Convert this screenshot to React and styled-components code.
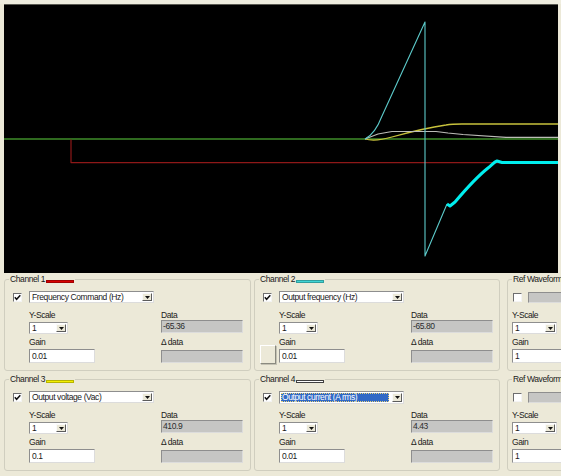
import React from 'react'
import styled, { createGlobalStyle, css } from 'styled-components'

const GlobalStyle = createGlobalStyle`
  html, body {
    margin: 0;
    padding: 0;
    background: #ece9d8;
  }
  body {
    font-family: "Liberation Sans", Arial, sans-serif;
    font-size: 8.5px;
    letter-spacing: -0.4px;
    color: #1a1a1a;
  }
`

const channelRows = [
  [
    { name: 'Channel 1', color: '#d80000', signal: 'Frequency Command (Hz)', data: '-65.36', gain: '0.01' },
    { name: 'Channel 2', color: '#40d4d4', signal: 'Output frequency (Hz)', data: '-65.80', gain: '0.01', extra: true },
  ],
  [
    { name: 'Channel 3', color: '#f4f000', signal: 'Output voltage (Vac)', data: '410.9', gain: '0.1' },
    { name: 'Channel 4', color: '#ffffff', signal: 'Output current (A rms)', data: '4.43', gain: '0.01', selected: true },
  ],
]

const Window = styled.div`
  width: 561px;
  height: 476px;
  overflow: hidden;
  background: #ece9d8;
  display: flex;
  flex-direction: column;
`

const TopStrip = styled.div`
  flex-shrink: 0;
  height: 4px;
  background: #efeddf;
`

const Scope = styled.div`
  flex-shrink: 0;
  width: 554px;
  height: 268px;
  margin-left: 4px;
  background: #000;
  border-top: 1px solid #5a5a52;
  svg {
    display: block;
  }
`

const Panels = styled.div`
  display: grid;
  grid-template-columns: 247px 246px 150px;
  column-gap: 3px;
  row-gap: 3px;
  padding: 1px 0 0 4px;
`

const Group = styled.fieldset`
  box-sizing: border-box;
  min-width: 0;
  margin: 0;
  margin-left: ${p => (p.$ref ? '4px' : '0')};
  padding: 7px 0 7px 0;
  border: 1px solid #d0cebf;
  border-radius: 3px;
`

const Legend = styled.legend`
  display: flex;
  align-items: center;
  margin-left: 4px;
  padding: 0 1px;
  height: 10px;
  line-height: 10px;
  white-space: nowrap;
`

const Swatch = styled.span`
  display: inline-block;
  width: 26px;
  height: 1px;
  margin-top: 5px;
  margin-left: 1px;
  background: ${p => p.$color};
  border: 1px solid ${p => (p.$color === '#ffffff' ? '#404040' : 'rgba(0, 0, 0, 0.25)')};
`

const TopRow = styled.div`
  display: flex;
  align-items: center;
  gap: ${p => p.$gap}px;
  padding-left: ${p => p.$pad}px;
  height: 12px;
`

const CheckBox = styled.span`
  box-sizing: border-box;
  flex-shrink: 0;
  width: 9px;
  height: 9px;
  display: flex;
  align-items: center;
  justify-content: center;
  background: #fff;
  border: 1px solid;
  border-color: #6e6e6e #f4f4f4 #f4f4f4 #6e6e6e;
  svg {
    display: block;
  }
`

const Fields = styled.div`
  display: grid;
  grid-template-columns: ${p => p.$cols};
  grid-template-rows: 10px 13px 10px 14px;
  row-gap: 2px;
  margin-top: 7px;
  padding-left: ${p => p.$pad || 0}px;
`

const Label = styled.div`
  grid-column: ${p => p.$col};
  line-height: 10px;
  white-space: nowrap;
`

const sunken = css`
  box-sizing: border-box;
  border: 1px solid;
  border-color: #8e8e8e #dcdcdc #dcdcdc #8e8e8e;
`

const Combo = styled.div`
  ${sunken};
  grid-column: ${p => p.$col || 'auto'};
  width: ${p => p.$w}px;
  height: ${p => p.$h || 13}px;
  display: flex;
  background: #fff;
  flex-shrink: 0;
`

const ComboText = styled.div`
  flex: 1;
  min-width: 0;
  overflow: hidden;
  white-space: nowrap;
  padding-left: 2px;
  line-height: 10px;
  ${p =>
    p.$selected &&
    css`
      margin: 1px 2px 1px 1px;
      padding-left: 1px;
      line-height: 9px;
      background: #3169c6;
      color: #fff;
      outline: 1px dotted #e9d27a;
      outline-offset: -1px;
    `}
`

const ArrowButton = styled.div`
  box-sizing: border-box;
  width: 10px;
  margin: 1px;
  display: flex;
  align-items: center;
  justify-content: center;
  background: #ece9d8;
  border: 1px solid;
  border-color: #fafafa #5c5c5c #5c5c5c #fafafa;
  svg {
    display: block;
  }
`

const ReadOut = styled.div`
  ${sunken};
  grid-column: 3;
  width: 82px;
  height: 13px;
  margin-top: ${p => p.$shift || 0}px;
  background: #c6c6c4;
  color: #2c2c2c;
  padding-left: 1px;
  line-height: 11px;
`

const TextInput = styled.div`
  ${sunken};
  grid-column: ${p => p.$col};
  width: ${p => p.$w}px;
  background: #fff;
  padding-left: 2px;
  line-height: 12px;
`

const Disabled = styled.div`
  ${sunken};
  flex: 1;
  height: 11px;
  background: #c6c6c4;
`

const SideButton = styled.div`
  box-sizing: border-box;
  grid-column: 1;
  grid-row: 3 / 5;
  align-self: end;
  width: 16px;
  height: 19px;
  margin-left: 5px;
  margin-bottom: -1px;
  background: #ece9d8;
  border: 1px solid;
  border-color: #ffffff #8a8a80 #8a8a80 #ffffff;
  box-shadow: 1px 1px 0 #c4c2b4;
`

const Tick = () => (
  <svg width="7" height="7" viewBox="0 0 7 7">
    <polyline points="0.8,3.3 2.6,5.3 6.3,1.2" fill="none" stroke="#111" strokeWidth="1.5" />
  </svg>
)

const Arrow = () => (
  <svg width="5" height="3" viewBox="0 0 5 3">
    <polygon points="0,0 5,0 2.5,3" fill="#111" />
  </svg>
)

const Select = ({ value, w, col, selected }) => (
  <Combo $w={w} $col={col} $h={selected ? 13 : 12}>
    <ComboText $selected={selected}>{value}</ComboText>
    <ArrowButton>
      <Arrow />
    </ArrowButton>
  </Combo>
)

const ChannelGroup = ({ ch }) => (
  <Group>
    <Legend>
      {ch.name}
      <Swatch $color={ch.color} />
    </Legend>
    <TopRow $pad={8} $gap={7}>
      <CheckBox>
        <Tick />
      </CheckBox>
      <Select value={ch.signal} w={125} selected={ch.selected} />
    </TopRow>
    <Fields $cols="24px 132px 82px">
      <Label $col={2}>Y-Scale</Label>
      <Label $col={3}>Data</Label>
      <Select value="1" w={39} col={2} />
      <ReadOut $shift={-2}>{ch.data}</ReadOut>
      <Label $col={2}>Gain</Label>
      <Label $col={3}>Δ data</Label>
      {ch.extra && <SideButton />}
      <TextInput $col={2} $w={66}>{ch.gain}</TextInput>
      <ReadOut $shift={1} />
    </Fields>
  </Group>
)

const RefGroup = () => (
  <Group $ref>
    <Legend>Ref Waveform</Legend>
    <TopRow $pad={5} $gap={6}>
      <CheckBox />
      <Disabled />
    </TopRow>
    <Fields $cols="1fr" $pad={4}>
      <Label $col={1}>Y-Scale</Label>
      <Select value="1" w={45} col={1} />
      <Label $col={1}>Gain</Label>
      <TextInput $col={1} $w={90}>1</TextInput>
    </Fields>
  </Group>
)

const Trace = styled.path`
  fill: none;
  stroke: ${p => p.$color};
  stroke-width: ${p => p.$w || 1.2};
  stroke-linejoin: round;
`

const Waveforms = () => (
  <svg width="554" height="268" viewBox="4 5 554 268">
    <Trace $color="#3f8e2a" $w={1.6} d="M4,139 H558" />
    <Trace $color="#8e1818" d="M71,139.5 V162.6 H558" />
    <Trace $color="#c8c23c" $w={1.3} d="M365,139 C372,141 380,140.5 392,137 C410,132 432,127 446,125 C452,124 456,124 462,124 H558" />
    <Trace $color="#bdbdb8" d="M365,139 L378,134 L392,131.5 L436,131.5 L448,133 L463,134.5 L506,137.3 H558" />
    <Trace $color="#5ccaca" $w={1.1} d="M365,139 C371,136 377,129 382,116 L425,22 V256 L447,204" />
    <Trace
      $color="#00eeee"
      $w={3}
      d="M447,204 L450,206 L455,202 C466,189 478,176 488,168 C492,165 494,162 497,161 L502,162.5 H558"
    />
  </svg>
)

export default function App() {
  return (
    <Window>
      <GlobalStyle />
      <TopStrip />
      <Scope>
        <Waveforms />
      </Scope>
      <Panels>
        {channelRows.map((row, i) => (
          <React.Fragment key={i}>
            {row.map(ch => (
              <ChannelGroup key={ch.name} ch={ch} />
            ))}
            <RefGroup />
          </React.Fragment>
        ))}
      </Panels>
    </Window>
  )
}
